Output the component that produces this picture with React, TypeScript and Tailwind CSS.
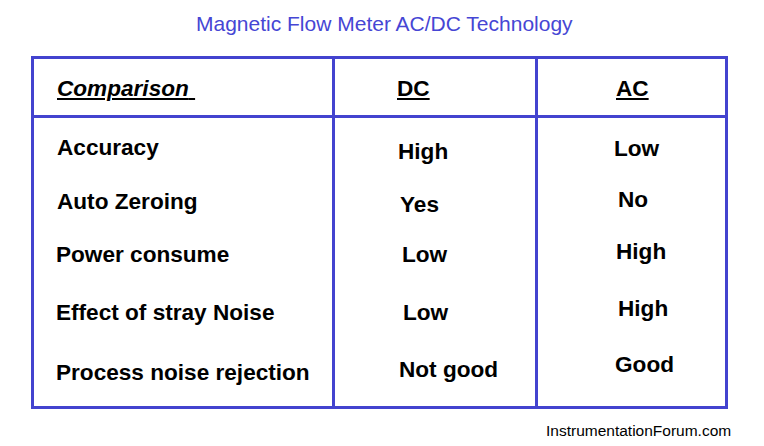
import React from "react";

const font = { fontFamily: '"Liberation Sans", Arial, Helvetica, sans-serif' };

export default function App() {
  return (
    <div className="w-[764px] h-[446px] bg-white" style={font}>
      <div className="pt-[13px] pl-[196px] text-[21px] leading-[21px] text-[#4646d4]">
        Magnetic Flow Meter AC/DC Technology
      </div>
      <div className="mt-[22px] ml-[31px] w-[697px] border-[3px] border-[#4343cf] flex text-black font-bold text-[22.6px] leading-[23px]">
        {/* Comparison column */}
        <div className="w-[301px] border-r-[3px] border-[#4343cf] flex flex-col">
          <div className="h-[59px] border-b-[3px] border-[#4343cf] pt-[18px] pl-[23px]">
            <span className="italic underline decoration-2 underline-offset-[2px]">Comparison{"\u00a0"}</span>
          </div>
          <div className="h-[288px] flex flex-col">
            <div className="mt-[18px] pl-[23px]">Accuracy</div>
            <div className="mt-[31px] pl-[23px]">Auto Zeroing</div>
            <div className="mt-[30px] pl-[22px]">Power consume</div>
            <div className="mt-[35px] pl-[22px]">Effect of stray Noise</div>
            <div className="mt-[37px] pl-[22px]">Process noise rejection</div>
          </div>
        </div>
        {/* DC column */}
        <div className="w-[203px] border-r-[3px] border-[#4343cf] flex flex-col">
          <div className="h-[59px] border-b-[3px] border-[#4343cf] pt-[18px] pl-[62px]">
            <span className="underline decoration-2 underline-offset-[2px]">DC</span>
          </div>
          <div className="h-[288px] flex flex-col">
            <div className="mt-[22px] pl-[63px]">High</div>
            <div className="mt-[30px] pl-[65px]">Yes</div>
            <div className="mt-[27px] pl-[67px]">Low</div>
            <div className="mt-[35px] pl-[68px]">Low</div>
            <div className="mt-[34px] pl-[64px]">Not good</div>
          </div>
        </div>
        {/* AC column */}
        <div className="w-[187px] flex flex-col">
          <div className="h-[59px] border-b-[3px] border-[#4343cf] pt-[18px] pl-[78px]">
            <span className="underline decoration-2 underline-offset-[2px]">AC</span>
          </div>
          <div className="h-[288px] flex flex-col">
            <div className="mt-[19px] pl-[76px]">Low</div>
            <div className="mt-[28px] pl-[80px]">No</div>
            <div className="mt-[29px] pl-[78px]">High</div>
            <div className="mt-[34px] pl-[80px]">High</div>
            <div className="mt-[33px] pl-[77px]">Good</div>
          </div>
        </div>
      </div>
      <div className="mt-[14px] pl-[546px] text-[15.5px] leading-[15px] text-black">
        InstrumentationForum.com
      </div>
    </div>
  );
}
